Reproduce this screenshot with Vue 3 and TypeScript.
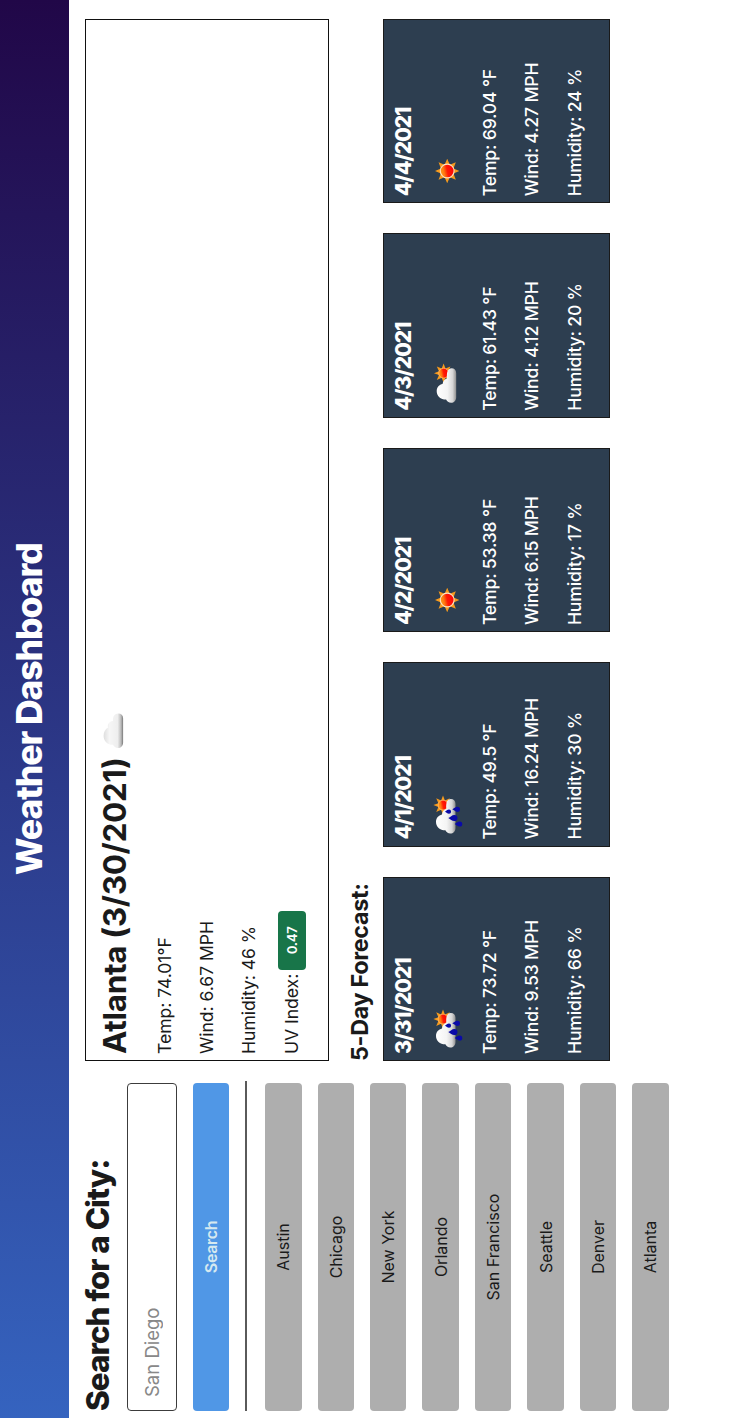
<script setup lang="ts">
import { ref } from 'vue'

type IconKind = 'rain' | 'partly' | 'sun'

interface ForecastDay {
  date: string
  icon: IconKind
  temp: string
  wind: string
  humidity: string
}

const query = ref('')

const cities: string[] = [
  'Austin',
  'Chicago',
  'New York',
  'Orlando',
  'San Francisco',
  'Seattle',
  'Denver',
  'Atlanta',
]

const forecast: ForecastDay[] = [
  { date: '3/31/2021', icon: 'rain', temp: '73.72 °F', wind: '9.53 MPH', humidity: '66 %' },
  { date: '4/1/2021', icon: 'rain', temp: '49.5 °F', wind: '16.24 MPH', humidity: '30 %' },
  { date: '4/2/2021', icon: 'sun', temp: '53.38 °F', wind: '6.15 MPH', humidity: '17 %' },
  { date: '4/3/2021', icon: 'partly', temp: '61.43 °F', wind: '4.12 MPH', humidity: '20 %' },
  { date: '4/4/2021', icon: 'sun', temp: '69.04 °F', wind: '4.27 MPH', humidity: '24 %' },
]

// Eight-pointed star centred on the origin
function star(outer: number, inner: number): string {
  const points: string[] = []
  for (let i = 0; i < 16; i++) {
    const r = i % 2 === 0 ? outer : inner
    const a = (Math.PI / 8) * i
    points.push(`${(r * Math.sin(a)).toFixed(2)},${(-r * Math.cos(a)).toFixed(2)}`)
  }
  return points.join(' ')
}

const bigStar = star(12.2, 6.8)
const smallStar = star(9.6, 5)

const cloud =
  'M5.5 19.5C2 19.5 0 17.2 0 14.4C0 12 1.2 10.2 3.2 9.4C3.2 3.8 6.8 0 12 0C16 0 19 1.8 20.4 4.6C23.4 3.4 26.4 5.4 27 9.4C31.6 8.8 34.5 11.4 34.5 14.6C34.5 17.6 32.6 19.5 29.6 19.5Z'
const lowCloud =
  'M5.5 19.5C2 19.5 0 17.2 0 14.4C0 12 1.2 10.2 3.2 9.4C3.2 3.8 6.8 0 11.5 0C15.6 0 18.2 2.6 19 6C21.4 6 23.4 7.8 24.6 10.4C30.8 9.6 34.5 11.4 34.5 14.8C34.5 17.6 32.6 19.5 29.6 19.5Z'
const drop = 'M0 -4.2C0.8 -2.4 2.6 -1.2 2.6 0.9A2.6 2.6 0 0 1 -2.6 0.9C-2.6 -1.2 -0.8 -2.4 0 -4.2Z'

const drops: { x: number; y: number; s: number }[] = [
  { x: 30.7, y: 34.5, s: 1 },
  { x: 28.3, y: 26.3, s: 0.8 },
  { x: 22, y: 31.3, s: 1.2 },
  { x: 16, y: 36.8, s: 1 },
]
</script>

<template>
  <div class="frame">
    <svg class="defs" width="0" height="0" aria-hidden="true">
      <defs>
        <linearGradient id="disc" x1="0.2" y1="0" x2="0.4" y2="1">
          <stop offset="0" stop-color="#ffa21a" />
          <stop offset="0.3" stop-color="#ff7a10" />
          <stop offset="0.55" stop-color="#ff1a05" />
          <stop offset="1" stop-color="#fb0505" />
        </linearGradient>
        <linearGradient id="fluff" x1="0" y1="0" x2="0" y2="1">
          <stop offset="0" stop-color="#ffffff" />
          <stop offset="0.55" stop-color="#f4f4f4" />
          <stop offset="0.82" stop-color="#d6d6d6" />
          <stop offset="1" stop-color="#8f8f8f" />
        </linearGradient>
        <linearGradient id="fluffLight" x1="0" y1="0" x2="0" y2="1">
          <stop offset="0" stop-color="#dedede" />
          <stop offset="0.3" stop-color="#f6f6f6" />
          <stop offset="0.72" stop-color="#eeeeee" />
          <stop offset="0.9" stop-color="#b8b8b8" />
          <stop offset="1" stop-color="#777777" />
        </linearGradient>
      </defs>
    </svg>
    <div class="page">
      <header class="top"><h1>Weather Dashboard</h1></header>
      <div class="body">
        <aside class="side">
          <h2>Search for a City:</h2>
          <input v-model="query" class="field" type="text" placeholder="San Diego" />
          <button class="btn search" type="button"><span>Search</span></button>
          <div class="rule"></div>
          <div class="cities">
            <button v-for="city in cities" :key="city" class="btn city" type="button">{{ city }}</button>
          </div>
        </aside>
        <main class="main">
          <section class="today">
            <div class="today-head">
              <h2>Atlanta (3/30/2021)</h2>
              <svg class="icon" viewBox="0 0 50 50">
                <path :d="cloud" transform="translate(8 14.6)" fill="url(#fluffLight)" />
              </svg>
            </div>
            <p>Temp: 74.01°F</p>
            <p>Wind: 6.67 MPH</p>
            <p>Humidity: 46 %</p>
            <p class="uv"><span>UV Index:</span><span class="badge">0.47</span></p>
          </section>
          <h3>5-Day Forecast:</h3>
          <div class="cards">
            <article v-for="day in forecast" :key="day.date" class="card">
              <h4>{{ day.date }}</h4>
              <svg class="icon" viewBox="0 0 50 50">
                <g v-if="day.icon === 'sun'" transform="translate(25 25.2)">
                  <polygon :points="bigStar" fill="#f79a1c" />
                  <circle r="6.9" fill="url(#disc)" stroke="#fbe3c4" stroke-width="1.1" />
                </g>
                <template v-else-if="day.icon === 'partly'">
                  <g transform="translate(37.8 21.6)">
                    <polygon :points="smallStar" fill="#f79a1c" />
                    <circle r="4.9" fill="url(#disc)" stroke="#fbc98a" stroke-width="0.6" />
                  </g>
                  <path :d="lowCloud" transform="translate(8.2 14.7)" fill="url(#fluff)" />
                </template>
                <template v-else>
                  <g transform="translate(34.9 21)">
                    <polygon :points="smallStar" fill="#f79a1c" />
                    <circle r="4.9" fill="url(#disc)" stroke="#fbc98a" stroke-width="0.6" />
                  </g>
                  <path :d="lowCloud" transform="translate(6.6 14)" fill="url(#fluff)" />
                  <path
                    v-for="(d, i) in drops"
                    :key="i"
                    :d="drop"
                    :transform="`translate(${d.x} ${d.y}) scale(${d.s})`"
                    fill="#0a0aa8"
                  />
                </template>
              </svg>
              <div class="stats">
                <p>Temp: {{ day.temp }}</p>
                <p>Wind: {{ day.wind }}</p>
                <p>Humidity: {{ day.humidity }}</p>
              </div>
            </article>
          </div>
        </main>
      </div>
    </div>
  </div>
</template>

<style>
html,
body {
  margin: 0;
  background: #fff;
}
</style>

<style scoped>
.frame {
  width: 732px;
  height: 1418px;
  overflow: hidden;
  background: #fff;
}
.defs {
  display: block;
}
/* The landscape dashboard is turned a quarter counter-clockwise */
.page {
  width: 1418px;
  height: 732px;
  transform-origin: 0 0;
  transform: translateY(1418px) rotate(-90deg);
  font-family: Inter, 'Liberation Sans', sans-serif;
  color: #1a1a1a;
}
h1,
h2,
h3,
h4,
p {
  margin: 0;
  white-space: nowrap;
}
.top {
  height: 69px;
  background: linear-gradient(90deg, #3563bf 0%, #210748 100%);
  text-align: center;
}
h1 {
  font-size: 35.5px;
  line-height: 60px;
  font-weight: 800;
  letter-spacing: -1.1px;
  color: #fff;
}
.body {
  display: flex;
  padding: 16px 19px 0 7px;
  gap: 22px;
}
.side {
  width: 328px;
  display: flex;
  flex-direction: column;
  gap: 16px;
}
.side h2 {
  font-size: 31.5px;
  line-height: 26px;
  font-weight: 800;
  letter-spacing: -1.02px;
}
.field {
  box-sizing: border-box;
  width: 100%;
  height: 50px;
  border: 1px solid #3c3c3c;
  border-radius: 4px;
  padding: 0 13px;
  font: 400 18.5px Inter, sans-serif;
  color: #1a1a1a;
  background: #fff;
  outline: none;
}
.field::placeholder {
  color: #888;
  opacity: 1;
}
.btn {
  display: block;
  width: 100%;
  height: 36.5px;
  padding: 0;
  border: 0;
  border-radius: 4px;
  font: 400 16px Inter, sans-serif;
  color: #1a1a1a;
  text-align: center;
}
.search {
  height: 36px;
  background: #5097e6;
  color: #d6e9f0;
  font-weight: 600;
  letter-spacing: -0.35px;
}
.rule {
  width: 330px;
  height: 2px;
  background: #5a5a5a;
}
.cities {
  display: flex;
  flex-direction: column;
  gap: 15.94px;
  margin-top: 2.1px;
}
.city {
  background: #aeaeae;
}
.main {
  width: 1042px;
}
.today {
  box-sizing: border-box;
  height: 244px;
  border: 1px solid #111;
  padding-left: 6px;
}
.today-head {
  display: flex;
  align-items: center;
  height: 55px;
  gap: 1px;
  margin-bottom: 2.8px;
}
.today h2 {
  font-size: 31.6px;
  line-height: 55px;
  padding-top: 1px;
  font-weight: 700;
  letter-spacing: -0.4px;
}
.icon {
  display: block;
  width: 50px;
  height: 50px;
}
.today p {
  font-size: 17.6px;
  line-height: 42.3px;
  letter-spacing: -0.05px;
}
.today .uv {
  display: flex;
  align-items: center;
}
.today .badge {
  width: 59px;
  height: 28px;
  margin-left: 4px;
  border-radius: 4px;
  background: #187549;
  color: #fff;
  font-size: 13.3px;
  font-weight: 600;
  line-height: 28px;
  letter-spacing: -0.3px;
  text-align: center;
}
h3 {
  margin: 19.4px 0 10.6px;
  font-size: 23.4px;
  line-height: 24px;
  font-weight: 700;
  letter-spacing: -0.35px;
}
.cards {
  display: flex;
  justify-content: space-between;
}
.card {
  box-sizing: border-box;
  width: 184.2px;
  height: 227px;
  border: 1px solid #1a1a1a;
  background: #2d3e50;
  color: #fff;
  padding-left: 6px;
}
.card h4 {
  font-size: 21.4px;
  line-height: 38px;
  font-weight: 800;
  letter-spacing: -1.2px;
}
.stats {
  display: flex;
  flex-direction: column;
  gap: 18.5px;
  margin-top: 6px;
}
.stats p {
  font-size: 17.6px;
  line-height: 24px;
  font-weight: 550;
  letter-spacing: -0.17px;
}
</style>
